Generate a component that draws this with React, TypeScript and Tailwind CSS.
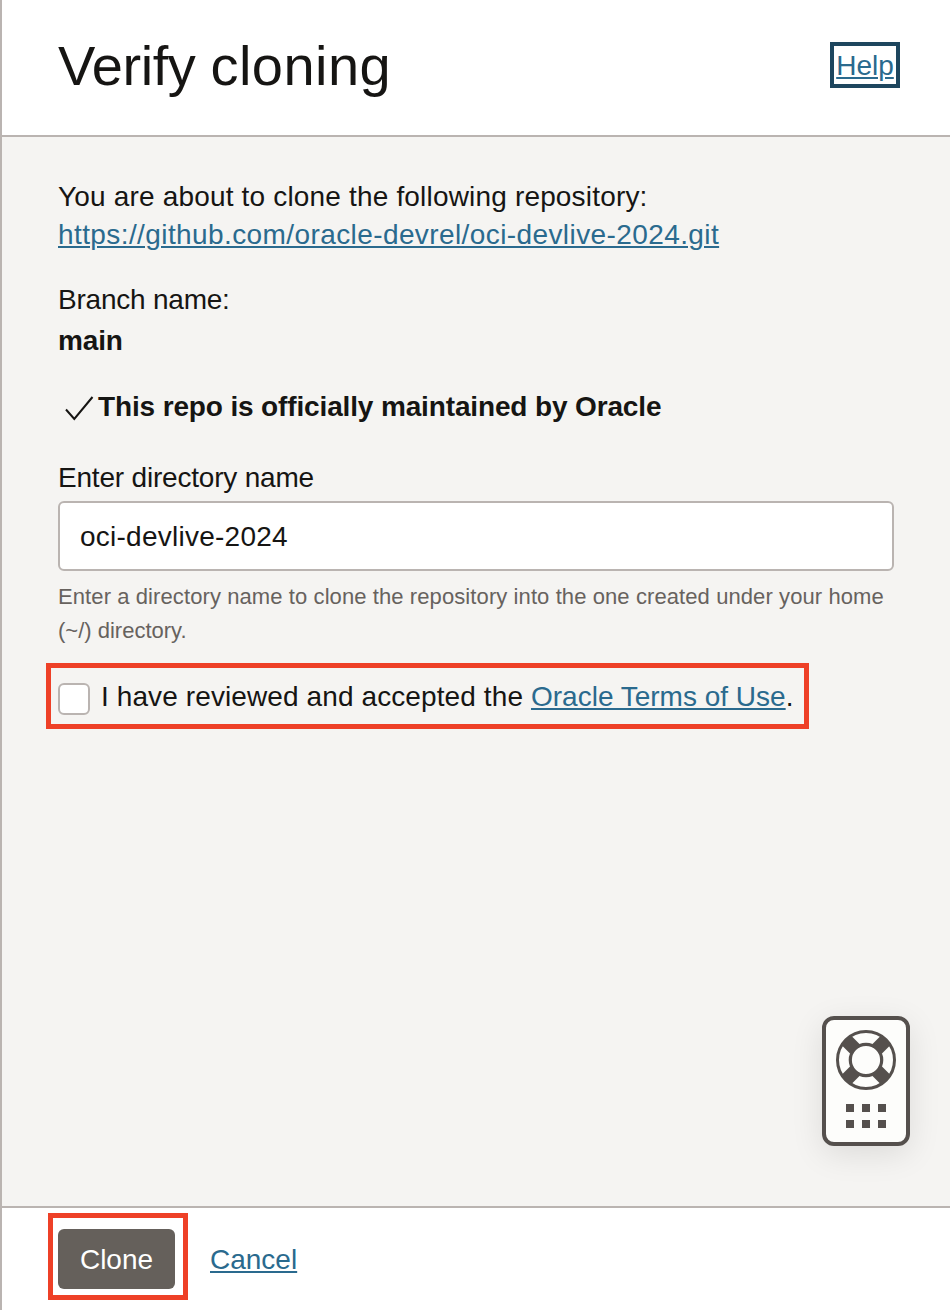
import React from "react";

const linkClass =
  "text-[#2a6a8e] underline decoration-2 underline-offset-[2px]";

function CheckMark() {
  return (
    <svg className="mt-[2px] block h-[26px] w-[30px] shrink-0" viewBox="0 0 30 26" fill="none" stroke="#161513" strokeWidth="2">
      <path d="M2 14.5 L10.3 24 L28.5 2" />
    </svg>
  );
}

function LifeRing() {
  return (
    <svg className="block h-[60px] w-[60px]" viewBox="0 0 60 60" fill="none" stroke="#55504d">
      <circle cx="30" cy="30" r="28.5" strokeWidth="3" />
      <g strokeWidth="13.5">
        <path d="M10.5 10.5 L19 19" />
        <path d="M49.5 10.5 L41 19" />
        <path d="M10.5 49.5 L19 41" />
        <path d="M49.5 49.5 L41 41" />
      </g>
      <circle cx="30" cy="30" r="15.7" strokeWidth="3.2" fill="#fdfdfb" />
    </svg>
  );
}

function HelpWidget() {
  return (
    <button
      type="button"
      aria-label="Support"
      className="absolute top-[1016px] left-[820px] flex h-[130px] w-[88px] flex-col items-center rounded-[12px] border-4 border-[#55504d] bg-[#fdfdfb] pt-[10px] shadow-[0_8px_32px_rgba(0,0,0,0.10)]"
    >
      <LifeRing />
      <span className="mt-[14px] grid grid-cols-3 gap-2">
        {[0, 1, 2, 3, 4, 5].map((n) => (
          <span key={n} className="size-2 bg-[#55504d]" />
        ))}
      </span>
    </button>
  );
}

export default function App() {
  return (
    <div className="relative flex h-[1310px] w-[950px] flex-col overflow-hidden border-l-2 border-[#bab4b1] bg-white font-['Liberation_Sans',Arial,sans-serif] text-[28px] leading-[38px] whitespace-nowrap text-[#161513]">
      <header className="flex h-[137px] shrink-0 items-start justify-between border-b-2 border-[#bab4b1] pr-[50px] pl-14">
        <h1 className="mt-[34px] text-[56px] leading-[64px]">
          <span className="tracking-[-0.45px]">Verify </span>
          <span className="tracking-[0.45px]">cloning</span>
        </h1>
        <a href="#help" className="mt-[42px] flex h-[46px] w-[70px] items-center justify-center border-4 border-[#1e465e] pt-[2px]">
          <span className={linkClass}>Help</span>
        </a>
      </header>

      <main className="flex flex-1 flex-col items-start bg-[#f5f4f2] pt-[41px] pl-14">
        <p className="tracking-[0.175px]">You are about to clone the following repository:</p>
        <a href="#repository" className={`tracking-[0.405px] ${linkClass}`}>https://github.com/oracle-devrel/oci-devlive-2024.git</a>
        <p className="mt-[27px] tracking-[-0.22px]">Branch name:</p>
        <p className="mt-[3px] font-bold tracking-[-0.15px]">main</p>
        <div className="mt-7 flex items-center pl-[6px]">
          <CheckMark />
          <p className="ml-1 font-bold tracking-[-0.14px]">This repo is officially maintained by Oracle</p>
        </div>
        <label htmlFor="directory" className="mt-[33px] tracking-[-0.2px]">Enter directory name</label>
        <input
          id="directory"
          defaultValue="oci-devlive-2024"
          className="mt-[4px] h-[70px] w-[836px] rounded-[6px] border-2 border-[#bab4b1] bg-white px-5 pt-[2px] tracking-[0.25px] outline-none"
        />
        <p className="mt-[9px] text-[22px] leading-[34px] text-[#67625e]">
          <span className="tracking-[0.093px]">Enter a directory name to clone the repository into the one created under your home</span>
          <br />
          (~/) directory.
        </p>
        <div className="mt-[15px] -ml-3 flex h-[66px] w-[763px] items-center border-[5px] border-[#ee4027] pl-[7px]">
          <input
            id="terms"
            type="checkbox"
            className="mt-[5px] size-8 shrink-0 appearance-none rounded-[6px] border-2 border-[#bab4b1] bg-white"
          />
          <label htmlFor="terms" className="mt-[2px] ml-[11px]">
            <span className="tracking-[0.105px]">I have reviewed and accepted the </span>
            <a href="#terms" className={linkClass}>Oracle Terms of Use</a>.
          </label>
        </div>
      </main>

      <footer className="flex h-[104px] shrink-0 items-start border-t-2 border-[#bab4b1] bg-white pt-[5px] pl-[46px]">
        <div className="flex h-[87px] w-[140px] border-[5px] border-[#ee4027] pt-[11px] pl-[5px]">
          <button type="button" className="flex h-[60px] w-[117px] items-center justify-center rounded-[6px] bg-[#65605b] pt-[2px] text-white">
            Clone
          </button>
        </div>
        <a href="#cancel" className={`mt-[28px] ml-[22px] ${linkClass}`}>Cancel</a>
      </footer>

      <HelpWidget />
    </div>
  );
}
